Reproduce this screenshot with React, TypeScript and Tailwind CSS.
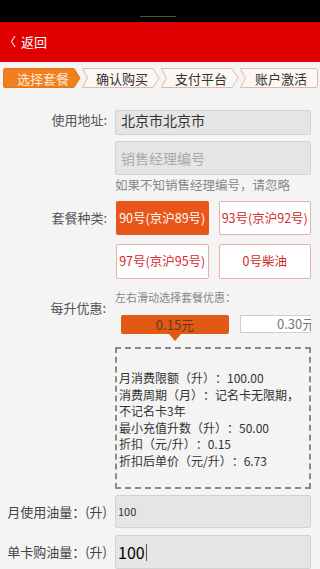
import React from "react";

function Tab({ label, first, last, active }: { label: string; first?: boolean; last?: boolean; active?: boolean }) {
  const w = 78;
  const h = 20;
  let d: string;
  if (first) {
    d = `M2 0.5 H${w - 7} L${w - 1} 10 L${w - 7} 19.5 H2 Q0.5 19.5 0.5 18 V2 Q0.5 0.5 2 0.5 Z`;
  } else if (last) {
    d = `M0.5 0.5 H${w - 2} Q${w - 0.5} 0.5 ${w - 0.5} 2 V18 Q${w - 0.5} 19.5 ${w - 2} 19.5 H0.5 L5.5 10 Z`;
  } else {
    d = `M0.5 0.5 H${w - 7} L${w - 1} 10 L${w - 7} 19.5 H0.5 L5.5 10 Z`;
  }
  return (
    <div className="relative w-[78px] h-[20px] flex items-center justify-center shrink-0">
      <svg className="absolute inset-0" width={w} height={h} viewBox={`0 0 ${w} ${h}`}>
        <path d={d} fill={active ? "#f0801e" : "#fbf7f5"} stroke={active ? "#e8731a" : "#e6b9a6"} strokeWidth="1" />
      </svg>
      <span className={`relative text-[13px] leading-none ${active ? "text-[#ffe9d8]" : "text-[#333]"} ${first ? "pl-[2px]" : last ? "pl-[4px]" : "pl-[2px]"}`}>
        {label}
      </span>
    </div>
  );
}

export default function App() {
  return (
    <div className="w-[320px] h-[569px] overflow-hidden bg-[#f4f4f4] font-['Noto_Sans_CJK_SC','Noto_Sans',sans-serif] [text-spacing-trim:space-all]">
      {/* status bar */}
      <div className="h-[22px] bg-black relative">
        <div className="absolute left-[140px] top-[16px] w-[36px] h-[1px] bg-[#5a5130]" />
      </div>
      {/* header */}
      <div className="h-[40px] bg-[#e00000] flex items-center pl-[4px] text-white text-[13px]">
        <span className="text-[12px] mr-[5px]">〈</span>
        <span>返回</span>
      </div>
      {/* tabs */}
      <div className="mt-[6px] flex px-[3px] gap-[1px]">
        <Tab label="选择套餐" first active />
        <Tab label="确认购买" />
        <Tab label="支付平台" />
        <Tab label="账户激活" last />
      </div>

      {/* form */}
      <div className="pr-[9px]">
        {/* address */}
        <div className="mt-[22px] flex">
          <div className="w-[107px] text-right text-[13px] leading-[18px] text-[#555] pt-[1px]">使用地址:</div>
          <div className="ml-[8px] flex-1 h-[25px] bg-[#e5e5e5] border border-[#d2d2d2] rounded-[2px] pl-[5px] text-[14px] leading-[18px] text-[#333]">
            北京市北京市
          </div>
        </div>
        {/* sales manager */}
        <div className="mt-[6px] flex">
          <div className="w-[107px]" />
          <div className="ml-[8px] flex-1">
            <div className="h-[34px] bg-[#e5e5e5] border border-[#d2d2d2] rounded-[2px] pl-[5px] flex items-center text-[14px] text-[#aaa]">
              销售经理编号
            </div>
            <div className="mt-[1px] text-[12.5px] leading-[17px] text-[#888]">如果不知销售经理编号，请忽略</div>
          </div>
        </div>
        {/* package types */}
        <div className="mt-[8px] flex">
          <div className="w-[107px] text-right text-[13px] leading-[18px] text-[#555] pt-[8px]">套餐种类:</div>
          <div className="ml-[9px] flex-1 grid grid-cols-2 gap-x-[10px] gap-y-[9px]">
            <div className="h-[34px] bg-[#e8561a] rounded-[2px] flex items-center justify-center text-[12.5px] text-white">90号(京沪89号)</div>
            <div className="h-[34px] bg-white border border-[#e4b2a6] rounded-[2px] flex items-center justify-center text-[12.5px] text-[#d42a2a]">93号(京沪92号)</div>
            <div className="h-[35px] bg-white border border-[#e4b2a6] rounded-[2px] flex items-center justify-center text-[12.5px] text-[#d42a2a]">97号(京沪95号)</div>
            <div className="h-[35px] bg-white border border-[#e4b2a6] rounded-[2px] flex items-center justify-center text-[12.5px] text-[#d42a2a]">0号柴油</div>
          </div>
        </div>
        {/* discount */}
        <div className="mt-[11px] flex">
          <div className="w-[107px] text-right text-[13px] leading-[18px] text-[#555] pt-[9px]">每升优惠:</div>
          <div className="ml-[9px] flex-1">
            <div className="text-[11px] leading-[14px] text-[#888]">左右滑动选择套餐优惠：</div>
            <div className="mt-[11px] flex">
              <div className="relative ml-[6px] w-[108px] h-[19px] bg-[#e05a14] rounded-[2px] flex items-center justify-center text-[13px] text-[#6a3618] shrink-0">
                0.15元
                <div className="absolute left-[48px] top-[19px] w-0 h-0 border-l-[6px] border-r-[6px] border-t-[7px] border-l-transparent border-r-transparent border-t-[#e05a14]" />
              </div>
              <div className="ml-[11px] w-[71px] h-[18px] bg-white border border-r-0 border-[#cfcfcf] shrink-0 overflow-hidden flex items-center pl-[36px] text-[13px] text-[#777] whitespace-nowrap">
                0.30元
              </div>
            </div>
            <div className="mt-[13px] h-[142px] border-2 border-dashed border-[#8a8a8a] pt-[21px] pl-[2px] text-[12px] leading-[16.6px] text-[#333]">
              <div>月消费限额（升）：100.00</div>
              <div>消费周期（月）：记名卡无限期，不记名卡3年</div>
              <div>最小充值升数（升）：50.00</div>
              <div>折扣（元/升）：0.15</div>
              <div>折扣后单价（元/升）：6.73</div>
            </div>
          </div>
        </div>
        {/* monthly usage */}
        <div className="mt-[6px] flex items-center">
          <div className="w-[107px] text-right text-[13px] text-[#444]">月使用油量：(升)</div>
          <div className="ml-[8px] flex-1 h-[33px] bg-[#e5e5e5] border border-[#d2d2d2] rounded-[2px] pl-[2px] flex items-center text-[11px] text-[#333]">
            100
          </div>
        </div>
        {/* per card */}
        <div className="mt-[7px] flex items-center">
          <div className="w-[107px] text-right text-[13px] text-[#444]">单卡购油量：(升)</div>
          <div className="ml-[8px] flex-1 h-[34px] bg-[#e5e5e5] border border-[#d2d2d2] rounded-[2px] pl-[2px] flex items-center text-[16px] text-black">
            100<span className="inline-block w-[1px] h-[17px] bg-[#555] ml-[1px]" />
          </div>
        </div>
      </div>
    </div>
  );
}
